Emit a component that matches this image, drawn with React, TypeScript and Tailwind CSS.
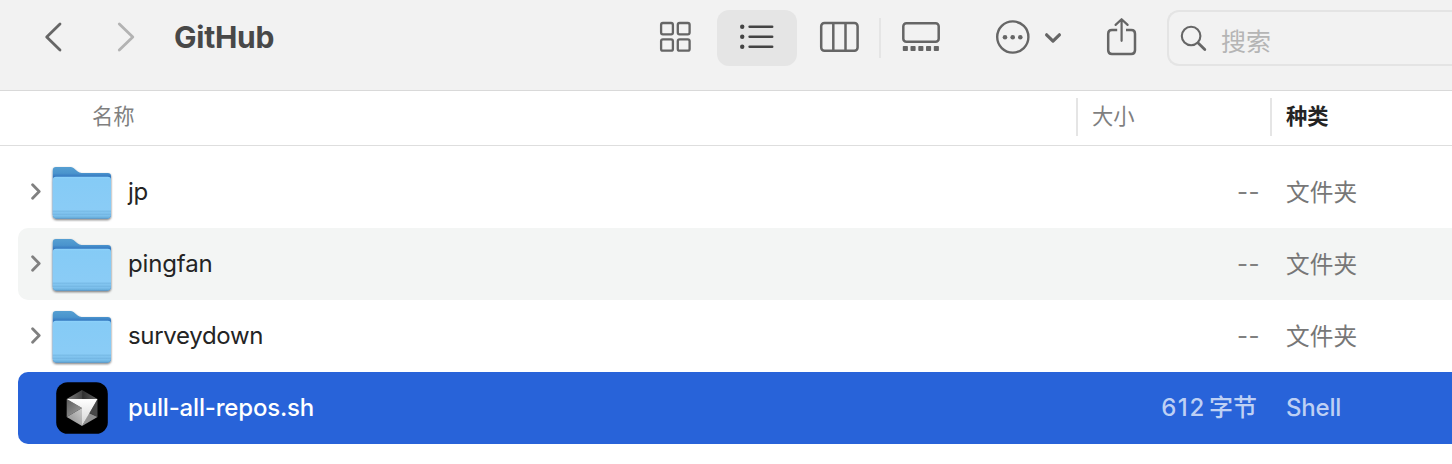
import React from 'react';

const font = 'font-["Inter","Noto_Sans_CJK_SC",sans-serif]';

function BackIcon() {
  return (
    <svg className="block h-[90px] w-[90px] shrink-0" viewBox="0 0 90 90" fill="none" stroke="#666666" strokeWidth="2.8" strokeLinecap="round" strokeLinejoin="round">
      <path d="M60 24 46.7 37 60 50" />
    </svg>
  );
}

function ForwardIcon() {
  return (
    <svg className="block h-[90px] w-[84px] shrink-0" viewBox="90 0 84 90" fill="none" stroke="#b3b3b3" strokeWidth="2.8" strokeLinecap="round" strokeLinejoin="round">
      <path d="M119.3 24 132.8 37 119.3 50" />
    </svg>
  );
}

function GridIcon() {
  return (
    <svg className="block h-[34px] w-[34px]" viewBox="658 20 34 34" fill="none" stroke="#666666" strokeWidth="2.3">
      <rect x="661.1" y="23" width="11.8" height="11.4" rx="1.8" />
      <rect x="677.8" y="23" width="11.8" height="11.4" rx="1.8" />
      <rect x="661.1" y="39.3" width="11.8" height="11.4" rx="1.8" />
      <rect x="677.8" y="39.3" width="11.8" height="11.4" rx="1.8" />
    </svg>
  );
}

function ListIcon() {
  return (
    <svg className="block h-14 w-20" viewBox="717 10 80 56" stroke="#444444" strokeWidth="2.5" strokeLinecap="round" fill="#444444">
      {[26.7, 36.8, 46.8].map((y) => (
        <g key={y}>
          <circle cx="742.2" cy={y} r="2.2" stroke="none" />
          <path d={`M749.6 ${y}H772.2`} />
        </g>
      ))}
    </svg>
  );
}

function ColumnsIcon() {
  return (
    <svg className="block h-[34px] w-[42px]" viewBox="818 20 42 34" fill="none" stroke="#666666" strokeWidth="2.5">
      <rect x="821.2" y="23" width="36.4" height="27.8" rx="3.2" />
      <path d="M833.3 23V51M845.5 23V51" />
    </svg>
  );
}

function GalleryIcon() {
  return (
    <svg className="block h-[34px] w-[42px]" viewBox="900 20 42 34" fill="none" stroke="#666666" strokeWidth="2.5">
      <rect x="903.3" y="23.2" width="35.4" height="18.6" rx="3" />
      {[902.8, 910.5, 918.3, 926, 933.8].map((x) => (
        <rect key={x} x={x} y="46" width="5.1" height="5" rx="0.8" fill="#666666" stroke="none" />
      ))}
    </svg>
  );
}

function MoreIcon() {
  return (
    <svg className="block h-10 w-[70px]" viewBox="994 17 70 40" fill="none" stroke="#666666" strokeWidth="2.4">
      <circle cx="1012.8" cy="37" r="15.6" />
      <g fill="#666666" stroke="none">
        <circle cx="1005" cy="37.2" r="2.3" />
        <circle cx="1012.7" cy="37.2" r="2.3" />
        <circle cx="1020.3" cy="37.2" r="2.3" />
      </g>
      <path d="m1046.6 34.8 6.4 6.3 6.4-6.3" strokeWidth="3.2" strokeLinecap="round" strokeLinejoin="round" />
    </svg>
  );
}

function ShareIcon() {
  return (
    <svg className="block h-10 w-8" viewBox="1106 17 32 40" fill="none" stroke="#666666" strokeWidth="2.5" strokeLinecap="round" strokeLinejoin="round">
      <path strokeLinecap="butt" d="M1117.2 30h-5.3q-3.7 0-3.7 3.7v16.6q0 3.7 3.7 3.7h19.4q3.7 0 3.7-3.7V33.7q0-3.7-3.7-3.7h-5.3" />
      <path strokeWidth="2.2" d="M1121.6 40.8V19.4M1115.6 24.9l6-5.7 6 5.7" />
    </svg>
  );
}

function SearchIcon() {
  return (
    <svg className="block h-7 w-7 shrink-0" viewBox="1180 24 28 28" fill="none" stroke="#666666" strokeLinecap="round">
      <circle cx="1191.1" cy="36" r="9.3" strokeWidth="2.1" />
      <path d="m1198.4 43.2 6.4 6.3" strokeWidth="2.8" />
    </svg>
  );
}

function Disclosure() {
  return (
    <svg className="block h-[18px] w-3" viewBox="0 0 12 18" fill="none" stroke="#808080" strokeWidth="2.8" strokeLinecap="round" strokeLinejoin="round">
      <path d="M2.6 1.8 9.2 8.5 2.6 15.2" />
    </svg>
  );
}

function FolderIcon() {
  return (
    <svg className="block h-[60px] w-16" viewBox="50 162 64 60">
      <defs>
        <linearGradient id="folderBack" x1="0" y1="0" x2="0" y2="1">
          <stop offset="0" stopColor="#559fd2" />
          <stop offset="0.12" stopColor="#4b94cd" />
          <stop offset="0.19" stopColor="#3478c0" />
          <stop offset="1" stopColor="#3478c0" />
        </linearGradient>
        <linearGradient id="folderFront" x1="0" y1="0" x2="0" y2="1">
          <stop offset="0" stopColor="#8ed2fb" />
          <stop offset="0.05" stopColor="#85cbf6" />
          <stop offset="0.8" stopColor="#8accf6" />
          <stop offset="0.82" stopColor="#76b9e5" />
          <stop offset="0.86" stopColor="#82c5f0" />
          <stop offset="0.91" stopColor="#72b6e3" />
          <stop offset="0.93" stopColor="#7dc1ed" />
          <stop offset="1" stopColor="#62a8d6" />
        </linearGradient>
        <filter id="folderShadow" x="-10%" y="-10%" width="120%" height="125%">
          <feDropShadow dx="0" dy="1.2" stdDeviation="0.9" floodColor="#000000" floodOpacity="0.55" />
        </filter>
      </defs>
      <g filter="url(#folderShadow)">
        <path fill="url(#folderBack)" d="M52.8 170.2q0-3.2 3.2-3.2h14.3q1.8 0 3.2 1.1l3.8 3.2q2 1.6 4.4 1.6h26.1q3.2 0 3.2 3.2v38.7q0 3.7-3.7 3.7H56.5q-3.7 0-3.7-3.7z" />
        <path fill="url(#folderFront)" d="M52.8 180q0-3.2 3.2-3.2h51.8q3.2 0 3.2 3.2v34.8q0 3.7-3.7 3.7H56.5q-3.7 0-3.7-3.7z" />
      </g>
    </svg>
  );
}

function CursorIcon() {
  return (
    <svg className="block h-[60px] w-16" viewBox="50 378 64 60">
      <defs>
        <linearGradient id="cubeLeft" x1="0" y1="0" x2="1" y2="1">
          <stop offset="0" stopColor="#5c5c5c" />
          <stop offset="1" stopColor="#a3a3a3" />
        </linearGradient>
        <linearGradient id="cubeTop" x1="0" y1="0" x2="1" y2="0">
          <stop offset="0" stopColor="#828282" />
          <stop offset="0.48" stopColor="#454545" />
          <stop offset="0.52" stopColor="#2f2f2f" />
          <stop offset="1" stopColor="#656565" />
        </linearGradient>
        <linearGradient id="cubeBottom" x1="0" y1="1" x2="1" y2="0">
          <stop offset="0" stopColor="#888888" />
          <stop offset="1" stopColor="#cccccc" />
        </linearGradient>
        <linearGradient id="cubeFace" x1="0" y1="0" x2="0" y2="1">
          <stop offset="0" stopColor="#ffffff" />
          <stop offset="1" stopColor="#d4d4d4" />
        </linearGradient>
      </defs>
      <rect x="56.2" y="382.2" width="51.6" height="51.6" rx="11.5" fill="#000000" />
      <path fill="url(#cubeTop)" d="m82 390 15.5 9H66.7z" />
      <path fill="url(#cubeLeft)" d="M66.7 399 82 408 66.7 417z" />
      <path fill="url(#cubeBottom)" d="m66.7 417 15.3-9v18z" />
      <path fill="#484848" d="M97.5 399v18l-8-4z" />
      <path fill="#929292" d="m97.5 417-8.5-4-7 13z" />
      <path fill="url(#cubeFace)" d="M66.7 399h30.8L82 426v-18z" />
    </svg>
  );
}

type FileRow = {
  name: string;
  size: React.ReactNode;
  kind: string;
  folder: boolean;
  row: string;
  nameStyle: string;
  sizeStyle: string;
  kindStyle: string;
};

const folderSize = 'text-[#808080] tracking-[0.4px]';
const folderKind = 'pt-px text-[23.7px] text-[#777777]';

const files: FileRow[] = [
  { name: 'jp', size: '--', kind: '文件夹', folder: true, row: 'bg-white', nameStyle: 'text-[#242424] tracking-[-0.2px]', sizeStyle: folderSize, kindStyle: folderKind },
  { name: 'pingfan', size: '--', kind: '文件夹', folder: true, row: 'bg-[#f3f5f4]', nameStyle: 'text-[#242424] tracking-[-0.15px]', sizeStyle: folderSize, kindStyle: folderKind },
  { name: 'surveydown', size: '--', kind: '文件夹', folder: true, row: 'bg-white', nameStyle: 'text-[#242424] tracking-[-0.32px]', sizeStyle: folderSize, kindStyle: folderKind },
  {
    name: 'pull-all-repos.sh',
    size: (
      <>
        <span className="tracking-[1.6px]">612</span>
        <span className="tracking-[-3.2px]"> </span>字节
      </>
    ),
    kind: 'Shell',
    folder: false,
    row: 'bg-[#2863d9]',
    nameStyle: 'text-white font-medium tracking-[-0.18px]',
    sizeStyle: 'pr-[3px] font-medium text-[#bed0f4]',
    kindStyle: 'text-2xl font-medium tracking-[-0.2px] text-[#bed0f4]',
  },
];

function Row({ file }: { file: FileRow }) {
  return (
    <div className={`flex h-[72px] items-center rounded-l-[10px] ${file.row}`}>
      <div className="flex w-8 shrink-0 justify-end pl-3">
        <div className="w-5 shrink-0">{file.folder && <Disclosure />}</div>
      </div>
      {file.folder ? <FolderIcon /> : <CursorIcon />}
      <div className={`ml-[14px] flex-1 text-2xl whitespace-nowrap ${file.nameStyle}`}>{file.name}</div>
      <div className={`w-[180px] text-right text-2xl whitespace-nowrap ${file.sizeStyle}`}>{file.size}</div>
      <div className={`ml-[26px] w-[166px] whitespace-nowrap ${file.kindStyle}`}>{file.kind}</div>
    </div>
  );
}

export default function App() {
  return (
    <div className={`flex h-[464px] w-[1452px] flex-col overflow-hidden bg-white ${font}`}>
      <header className="flex h-[91px] shrink-0 border-b border-[#d9d9d9] bg-[#f2f2f2]">
        <BackIcon />
        <ForwardIcon />
        <h1 className="mt-[17px] w-[484px] text-[30px] leading-10 font-bold tracking-[-0.25px] text-[#484848]">GitHub</h1>
        <div className="mt-[10px] flex h-14">
          <div className="mt-[10px]"><GridIcon /></div>
          <div className="ml-[25px] rounded-xl bg-[#e5e5e5]"><ListIcon /></div>
          <div className="mt-[10px] ml-[21px]"><ColumnsIcon /></div>
          <div className="mt-2 ml-[19px] h-10 w-[2px] bg-[#e5e5e5]" />
          <div className="mt-[10px] ml-[19px]"><GalleryIcon /></div>
          <div className="mt-[7px] ml-[52px]"><MoreIcon /></div>
          <div className="mt-[7px] ml-[42px]"><ShareIcon /></div>
          <div className="ml-[29px] flex h-14 w-[285px] rounded-l-xl border-2 border-r-0 border-[#e4e4e4] pt-3 pl-[11px]">
            <SearchIcon />
            <span className="ml-[13px] text-[25px] leading-9 text-[#b5b5b5]">搜索</span>
          </div>
        </div>
      </header>
      <div className="flex h-[55px] shrink-0 border-b border-[#dedede] pt-[7px] text-[21.3px] leading-9 text-[#7f7f7f]">
        <div className="w-[1076px] pl-[92px]">名称</div>
        <div className="h-[38px] w-[194px] border-l-2 border-[#e5e5e5] pl-[14px]">大小</div>
        <div className="h-[38px] flex-1 border-l-2 border-[#e5e5e5] pl-[14px] font-bold text-[#242424]">种类</div>
      </div>
      <main className="mt-[10px] flex flex-col pl-[18px]">
        {files.map((file) => (
          <Row key={file.name} file={file} />
        ))}
      </main>
    </div>
  );
}
